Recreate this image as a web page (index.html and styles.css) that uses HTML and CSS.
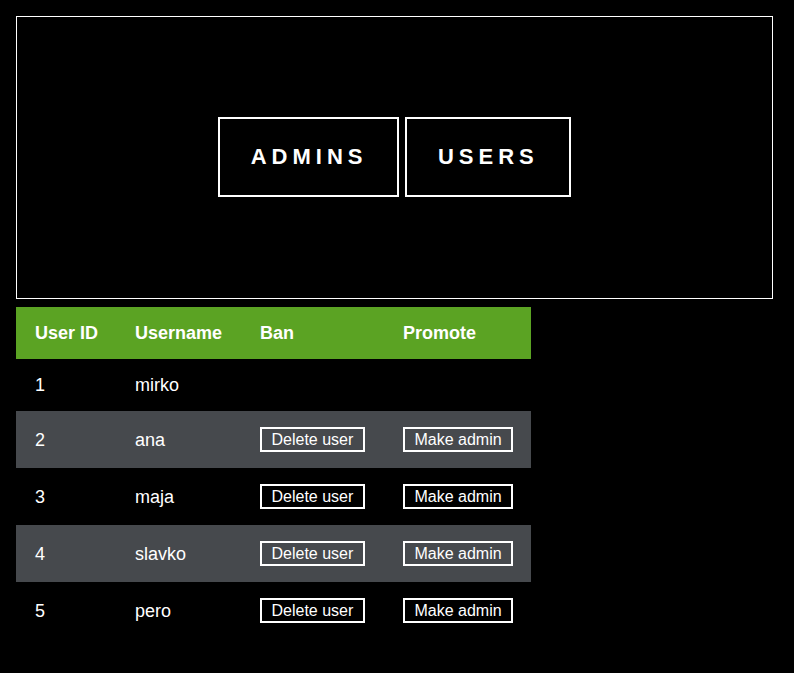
FILE: index.html
```html
<!DOCTYPE html>
<html>
<head>
<meta charset="utf-8">
<link rel="stylesheet" href="styles.css">
</head>
<body>
<div class="hero">
  <button class="tab">ADMINS</button>
  <button class="tab">USERS</button>
</div>
<table class="users">
  <thead>
    <tr><th class="c1">User ID</th><th class="c2">Username</th><th class="c3">Ban</th><th class="c4">Promote</th></tr>
  </thead>
  <tbody>
    <tr><td>1</td><td>mirko</td><td></td><td></td></tr>
    <tr class="alt"><td>2</td><td>ana</td><td><button class="act">Delete user</button></td><td><button class="act">Make admin</button></td></tr>
    <tr><td>3</td><td>maja</td><td><button class="act">Delete user</button></td><td><button class="act">Make admin</button></td></tr>
    <tr class="alt"><td>4</td><td>slavko</td><td><button class="act">Delete user</button></td><td><button class="act">Make admin</button></td></tr>
    <tr><td>5</td><td>pero</td><td><button class="act">Delete user</button></td><td><button class="act">Make admin</button></td></tr>
  </tbody>
</table>
</body>
</html>
```
FILE: styles.css
```css
html, body {
  background: #000;
}
body {
  margin: 16px;
  color: #fff;
  font-family: "Liberation Sans", Arial, sans-serif;
}
.hero {
  width: 755px;
  height: 280px;
  padding-bottom: 1px;
  border: 1px solid #fff;
  display: flex;
  align-items: center;
  justify-content: center;
  gap: 6px;
}
.tab {
  background: #000;
  color: #fff;
  border: 2px solid #fff;
  font-family: "Liberation Sans", Arial, sans-serif;
  font-weight: bold;
  font-size: 22px;
  line-height: 24px;
  letter-spacing: 5px;
  padding: 26px 30px 26px 30.5px;
  margin: 0;
  white-space: nowrap;
}
.users {
  margin-top: 8px;
  border-collapse: collapse;
  border-spacing: 0;
  font-size: 18px;
  line-height: 20px;
}
.users th, .users td {
  padding: 16px 18px;
  text-align: left;
  vertical-align: middle;
  white-space: nowrap;
}
.users th:first-child, .users td:first-child {
  padding-left: 19px;
}
.users th {
  background: #5ba323;
  font-weight: bold;
}
.c1 { width: 64px; }
.c2 { width: 89px; }
.c3 { width: 107px; }
.c4 { width: 110px; }
.users tr.alt td {
  background: #46494d;
}
.act {
  background: transparent;
  color: #fff;
  border: 2px solid #fff;
  font-family: "Liberation Sans", Arial, sans-serif;
  font-size: 16px;
  line-height: 17px;
  padding: 2px 9.5px;
  margin: 0;
  display: block;
  white-space: nowrap;
}
```
